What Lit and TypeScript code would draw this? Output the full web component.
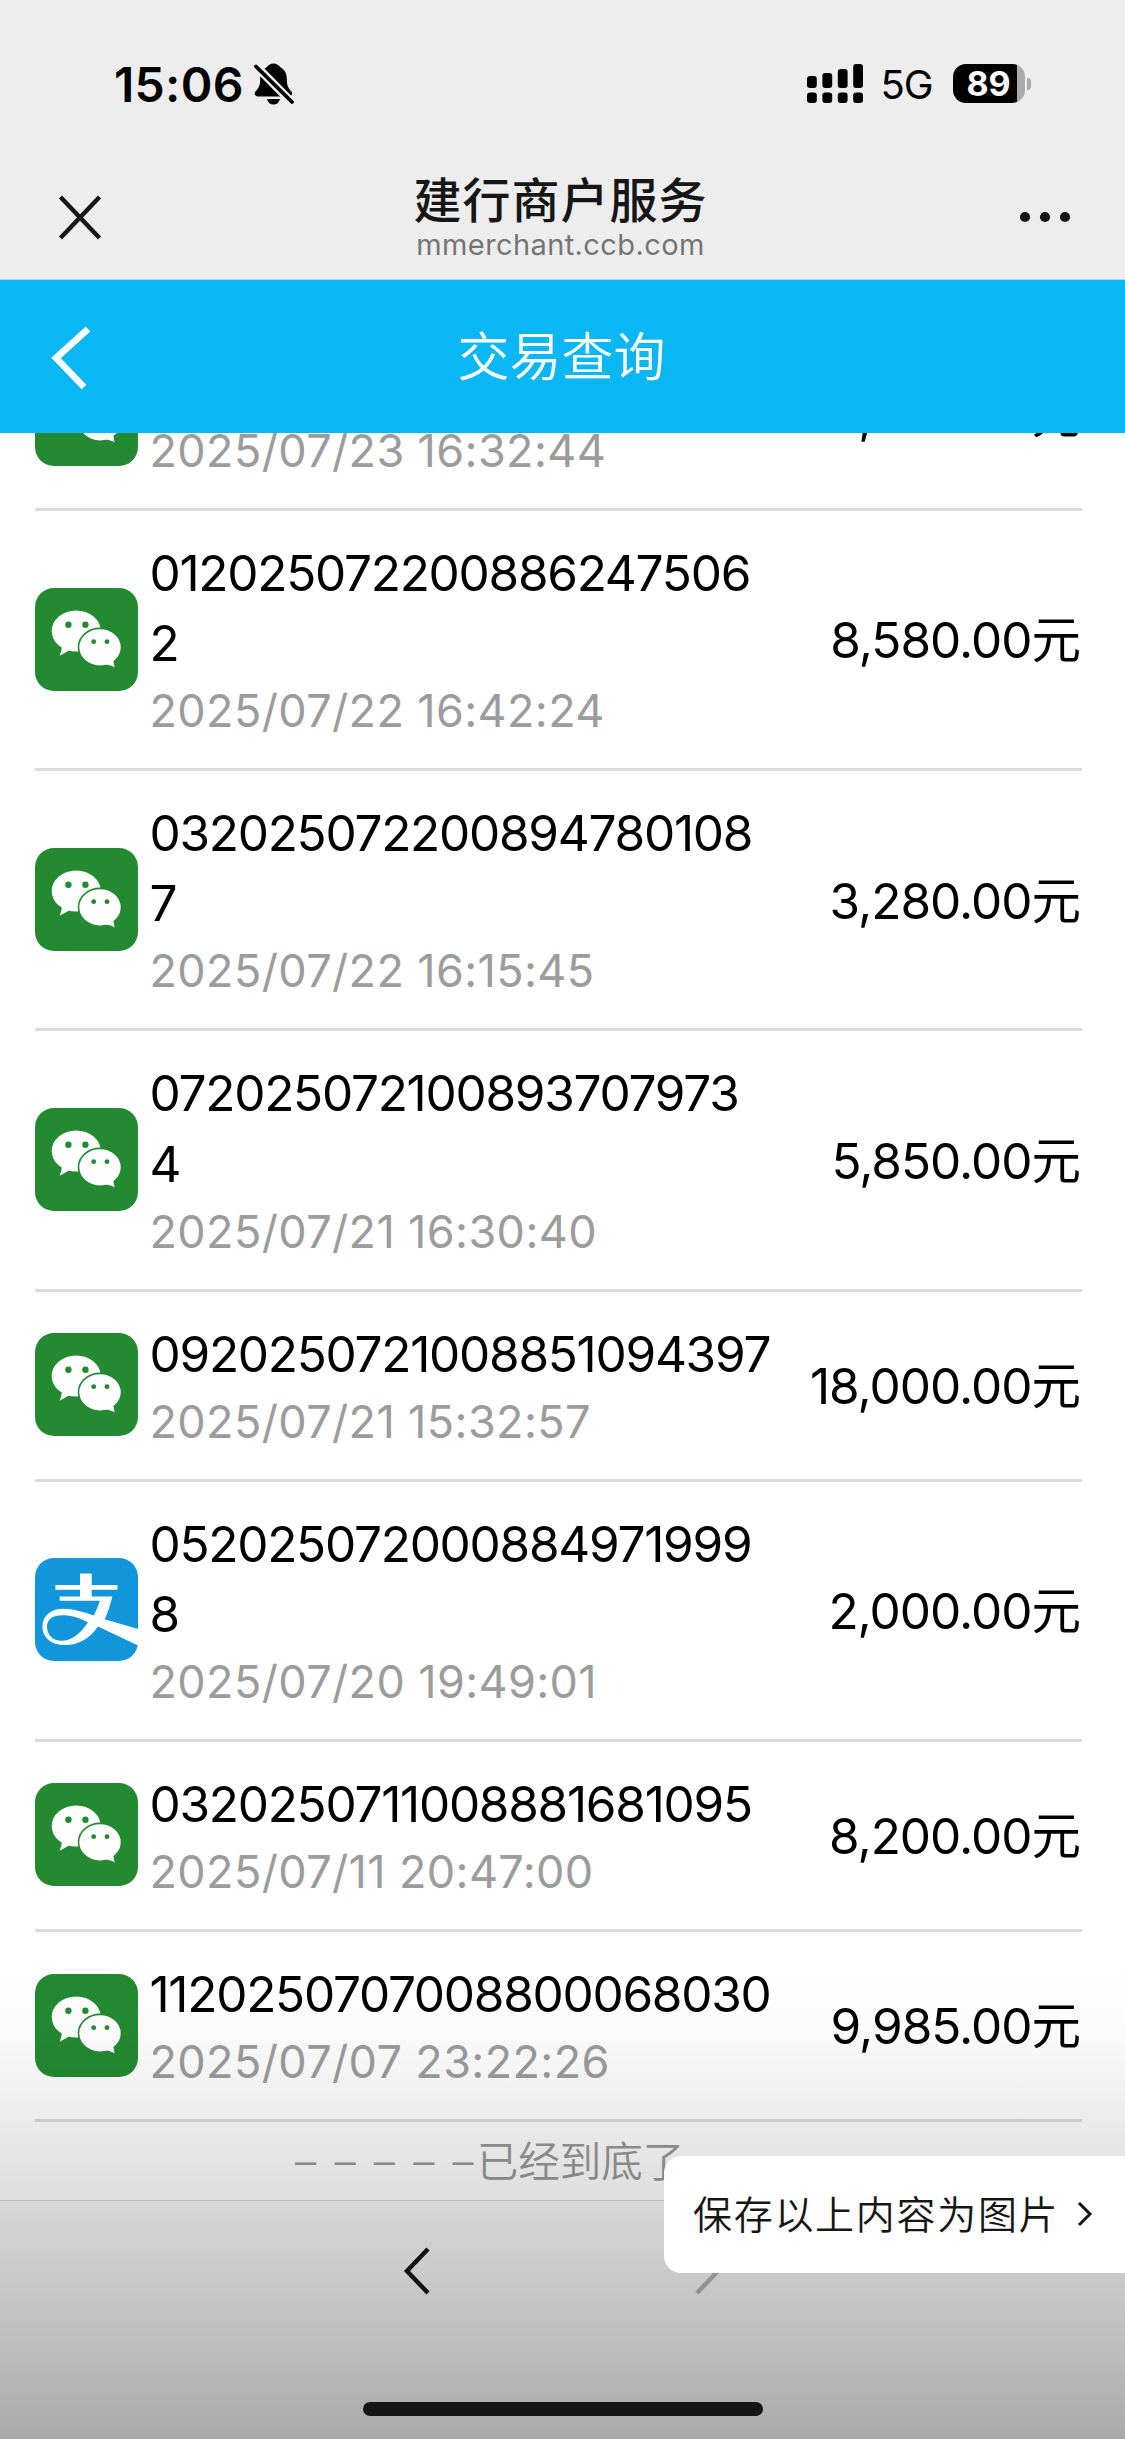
import { LitElement, html, svg, css } from "lit";
import { customElement, property } from "lit/decorators.js";

type Channel = "wechat" | "alipay";

interface Transaction {
  channel: Channel;
  id: string[];
  time: string;
  amount: string;
}

const TRANSACTIONS: Transaction[] = [
  { channel: "wechat", id: [""], time: "2025/07/23 16:32:44", amount: "8,500.00" },
  { channel: "wechat", id: ["012025072200886247506", "2"], time: "2025/07/22 16:42:24", amount: "8,580.00" },
  { channel: "wechat", id: ["032025072200894780108", "7"], time: "2025/07/22 16:15:45", amount: "3,280.00" },
  { channel: "wechat", id: ["072025072100893707973", "4"], time: "2025/07/21 16:30:40", amount: "5,850.00" },
  { channel: "wechat", id: ["0920250721008851094397"], time: "2025/07/21 15:32:57", amount: "18,000.00" },
  { channel: "alipay", id: ["052025072000884971999", "8"], time: "2025/07/20 19:49:01", amount: "2,000.00" },
  { channel: "wechat", id: ["0320250711008881681095"], time: "2025/07/11 20:47:00", amount: "8,200.00" },
  { channel: "wechat", id: ["1120250707008800068030"], time: "2025/07/07 23:22:26", amount: "9,985.00" },
];

const wechatMark = svg`
  <rect width="103" height="103" rx="19" fill="#238a31"></rect>
  <ellipse cx="41.2" cy="43" rx="24.5" ry="20.6" fill="#fff"></ellipse>
  <path d="M27 58 Q26.6 64 24.7 67.7 L34 62.6 Z" fill="#fff"></path>
  <circle cx="33.4" cy="36.7" r="3.2" fill="#238a31"></circle>
  <circle cx="50.4" cy="36.7" r="3.2" fill="#238a31"></circle>
  <ellipse cx="65" cy="59.3" rx="21.5" ry="18.9" fill="#fff" stroke="#238a31" stroke-width="1.6"></ellipse>
  <path d="M70 76.4 Q76 76.6 79.6 79.6 L78 71 Z" fill="#fff"></path>
  <circle cx="58.7" cy="53.7" r="2.4" fill="#238a31"></circle>
  <circle cx="72" cy="53.7" r="2.4" fill="#238a31"></circle>`;

const alipayMark = svg`
  <rect width="103" height="103" rx="19" fill="#1296db"></rect>
  <path fill="#fff" d="M45 15.4H56.7V27H82.4V31.7H56.7V38.4H77.4Q74.6 51 69.7 61.3L103 71V87.4L63 68.4Q50 87 29.7 87C16 87 7.4 79 7.4 68.4C7.4 58 16 50.7 28 50.7C39 50.7 49 54.2 58.7 57.4Q62.6 50 65 42.7H24.7V38.4H45V31.7H20.4V27H45Z"></path>
  <path fill="#1296db" d="M53 64.4C44 59.6 36 57.2 27.7 57.2C18 57.2 12 61 12 68.4C12 77 18 82.7 26.4 82.7C38 82.7 46 74 53 64.4Z"></path>`;

@customElement("transaction-row")
export class TransactionRow extends LitElement {
  @property({ attribute: false }) item!: Transaction;

  static styles = css`
    :host {
      display: flex;
      align-items: center;
      box-sizing: border-box;
      padding: 28px 0 25px;
      border-bottom: 3px solid #dcdcdc;
    }
    .mark {
      display: block;
      width: 103px;
      height: 103px;
      margin-bottom: 4px;
      flex: none;
    }
    .detail {
      flex: 1;
      padding-left: 11.5px;
      white-space: nowrap;
    }
    .line {
      display: block;
      height: 70.1px;
      line-height: 68px;
      font-size: 49.5px;
      letter-spacing: -1.26px;
      color: #000;
    }
    .time {
      display: block;
      height: 64px;
      line-height: 64px;
      font-size: 45px;
      letter-spacing: 0.38px;
      color: #9c9c9c;
    }
    .amount {
      flex: none;
      padding: 0 2px 1.5px 0;
      font-size: 49.5px;
      line-height: 70px;
      color: #000;
      letter-spacing: -1px;
    }
  `;

  render() {
    const { channel, id, time, amount } = this.item;
    return html`
      <svg class="mark" viewBox="0 0 103 103">${channel === "wechat" ? wechatMark : alipayMark}</svg>
      <div class="detail">
        ${id.map((line) => html`<span class="line">${line}</span>`)}
        <span class="time">${time}</span>
      </div>
      <div class="amount">${amount}元</div>
    `;
  }
}

@customElement("app-root")
export class AppRoot extends LitElement {
  static styles = css`
    :host {
      display: flex;
      flex-direction: column;
      position: relative;
      width: 1125px;
      height: 2439px;
      overflow: hidden;
      background: #fff;
      font-family: Inter, "Noto Sans CJK SC", sans-serif;
    }
    svg {
      display: block;
      flex: none;
    }
    .status {
      display: flex;
      align-items: center;
      box-sizing: border-box;
      height: 167px;
      padding: 0 94px 0 114px;
      background: #ededed;
      color: #000;
    }
    .clock {
      font-size: 48px;
      font-weight: 600;
      width: 140px;
      padding-top: 1px;
      white-space: nowrap;
      letter-spacing: 0.3px;
    }
    .spacer {
      flex: 1;
    }
    .network {
      margin-left: 17px;
      width: 72px;
      padding-top: 2px;
      font-size: 40px;
      letter-spacing: -1px;
    }
    .battery {
      display: flex;
      align-items: center;
      gap: 2.5px;
    }
    .cell {
      display: flex;
      align-items: center;
      justify-content: center;
      width: 72px;
      height: 39px;
      border-radius: 13px;
      background: linear-gradient(90deg, #000 64px, #a9a9a9 64px);
      color: #fff;
      font-size: 34px;
      font-weight: 700;
    }
    .nub {
      width: 4px;
      height: 12px;
      border-radius: 0 6px 6px 0;
      background: #a9a9a9;
    }
    .browser {
      display: flex;
      align-items: center;
      justify-content: space-between;
      box-sizing: border-box;
      height: 113px;
      padding: 0 54px 12px 56px;
      background: #ededed;
      border-bottom: 1px solid #b5dbea;
    }
    .site {
      display: flex;
      flex-direction: column;
      align-items: center;
      padding: 0 2px 2px 0;
    }
    .name {
      height: 57px;
      line-height: 57px;
      font-size: 48px;
      font-weight: 500;
      letter-spacing: 1px;
      color: #161616;
    }
    .host {
      height: 31px;
      line-height: 31px;
      font-size: 29px;
      color: #757575;
      letter-spacing: 0.4px;
    }
    .header {
      display: grid;
      grid-template-columns: 120px 1fr 120px;
      align-items: center;
      height: 153px;
      background: #0ab6f4;
      color: #fff;
    }
    .header svg {
      margin-left: 48px;
    }
    .header-title {
      text-align: center;
      font-size: 52px;
      line-height: 76px;
      font-weight: 350;
      padding: 2px 2px 0 0;
    }
    .content {
      height: 1767px;
      overflow: hidden;
    }
    .list {
      display: flex;
      flex-direction: column;
      margin: -112px 43px 0 35px;
    }
    .end {
      display: flex;
      align-items: center;
      height: 74px;
      padding-left: 295px;
      color: #999;
      font-size: 41.5px;
      font-weight: 350;
      white-space: nowrap;
    }
    .dashes {
      font-family: "Liberation Sans", sans-serif;
      font-size: 38px;
      word-spacing: 7.7px;
      padding: 4px 3px 0 0;
    }
    .toolbar {
      display: flex;
      justify-content: center;
      gap: 259px;
      flex: 1;
      box-sizing: border-box;
      padding-top: 44px;
      background: #f7f7f7;
      border-top: 1px solid #d8d8d8;
    }
    .shade {
      position: absolute;
      left: 0;
      right: 0;
      bottom: 0;
      height: 479px;
      background: linear-gradient(
        rgba(0, 0, 0, 0) 0,
        rgba(0, 0, 0, 0.012) 60px,
        rgba(0, 0, 0, 0.055) 130px,
        rgba(0, 0, 0, 0.095) 180px,
        rgba(0, 0, 0, 0.13) 240px,
        rgba(0, 0, 0, 0.225) 370px,
        rgba(0, 0, 0, 0.315) 479px
      );
    }
    .home {
      position: absolute;
      left: 363px;
      bottom: 23px;
      width: 400px;
      height: 14px;
      border-radius: 7px;
      background: #161616;
    }
    .save {
      position: absolute;
      right: 0;
      bottom: 166px;
      display: flex;
      align-items: center;
      box-sizing: border-box;
      width: 461px;
      height: 117px;
      padding-left: 29px;
      border-radius: 17px 0 0 17px;
      background: #fff;
      color: #161616;
      font-size: 39px;
      font-weight: 350;
      letter-spacing: 1.7px;
      white-space: nowrap;
    }
    .save span {
      padding-bottom: 5px;
    }
    .save svg {
      margin-left: 15px;
      margin-bottom: 1px;
    }
  `;

  render() {
    return html`
      <div class="status">
        <span class="clock">15:06</span>
        <svg width="40" height="42" viewBox="0 0 40 42">
          <path d="M19.5 0.5C23 0.5 24.6 2.4 26.4 4.2C31 6.6 32.8 11 32.8 16C32.8 23 34.6 25.4 37.4 28.6C38.8 30.6 38 33.4 35.4 33.4H3.6C1 33.4 0 30.6 1.4 28.6C4.4 25.4 6.2 23 6.2 16C6.2 11 8.4 6.6 12.6 4.2C14.4 2.4 16 .5 19.5 .5Z" fill="#000"></path>
          <path d="M13 36H26Q24.5 41.5 19.5 41.5Q14.5 41.5 13 36Z" fill="#000"></path>
          <path d="M-1 0L39 40.5" stroke="#ededed" stroke-width="8.5"></path>
          <path d="M2 3.5L38 39" stroke="#000" stroke-width="3.8" stroke-linecap="round"></path>
        </svg>
        <span class="spacer"></span>
        <svg width="57" height="39" viewBox="0 0 57 39">
          ${[12, 9, 5, 0].map(
            (top, i) => svg`
              <rect x=${i * 15.4} y=${top} width="9.8" height=${24 - top} rx="3"></rect>
              <rect x=${i * 15.4} y="28.5" width="9.8" height="10.5" rx="3"></rect>`
          )}
        </svg>
        <span class="network">5G</span>
        <div class="battery"><div class="cell">89</div><div class="nub"></div></div>
      </div>

      <div class="browser">
        <svg width="48" height="48" viewBox="0 0 48 48">
          <path d="M4.5 4L43.5 45M43.5 4L4.5 45" stroke="#161616" stroke-width="4.4"></path>
        </svg>
        <div class="site">
          <div class="name">建行商户服务</div>
          <div class="host">mmerchant.ccb.com</div>
        </div>
        <svg width="52" height="12" viewBox="0 0 52 12">
          <circle cx="6" cy="6" r="5.1" fill="#161616"></circle>
          <circle cx="26" cy="6" r="5.1" fill="#161616"></circle>
          <circle cx="46" cy="6" r="5.1" fill="#161616"></circle>
        </svg>
      </div>

      <div class="header">
        <svg width="46" height="68" viewBox="0 0 46 68">
          <path d="M40 6L8 35L36 64" fill="none" stroke="#fff" stroke-width="6.6"></path>
        </svg>
        <div class="header-title">交易查询</div>
      </div>

      <div class="content">
        <div class="list">
          ${TRANSACTIONS.map((t) => html`<transaction-row .item=${t}></transaction-row>`)}
        </div>
        <div class="end"><span class="dashes">– – – – –</span><span>已经到底了</span></div>
      </div>

      <div class="toolbar">
        <svg width="32" height="52" viewBox="0 0 32 52">
          <path d="M27 4L6 26L27 48" fill="none" stroke="#161616" stroke-width="4.4"></path>
        </svg>
        <svg width="32" height="52" viewBox="0 0 32 52">
          <path d="M5 4L26 26L5 48" fill="none" stroke="#b4b4b4" stroke-width="4.4"></path>
        </svg>
      </div>

      <div class="shade"></div>
      <div class="home"></div>
      <div class="save">
        <span>保存以上内容为图片</span>
        <svg width="22" height="30" viewBox="0 0 22 30">
          <path d="M5 4L16 15L5 26" fill="none" stroke="#161616" stroke-width="3"></path>
        </svg>
      </div>
    `;
  }
}
